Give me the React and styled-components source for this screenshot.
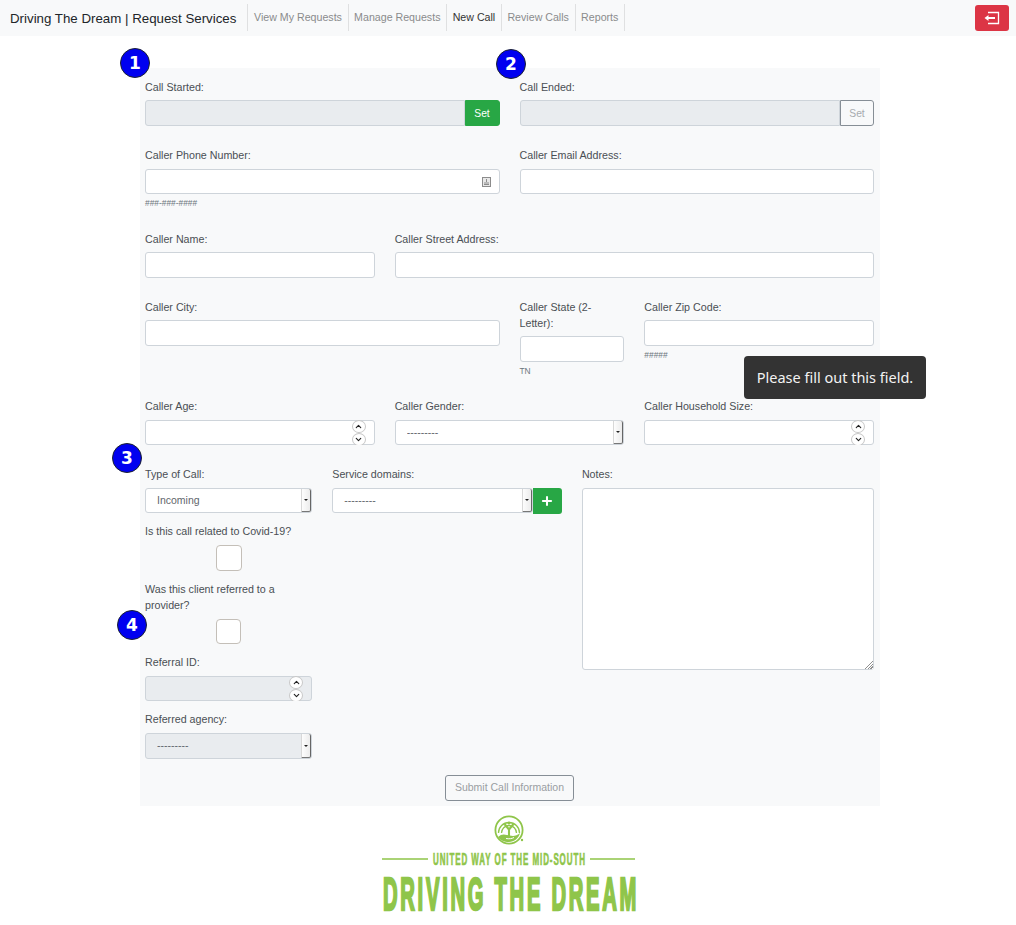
import React from 'react';
import styled, { createGlobalStyle } from 'styled-components';
import { ChevronUp, ChevronDown, Plus } from 'lucide-react';

const GlobalStyle = createGlobalStyle`
  html, body {
    margin: 0;
    padding: 0;
    background: #fff;
    font-family: 'Liberation Sans', Arial, sans-serif;
    color: #212529;
  }
  * {
    box-sizing: border-box;
  }
`;

const Navbar = styled.nav`
  height: 36px;
  background: #f8f9fa;
  display: flex;
  align-items: center;
  padding: 0 7px 0 10px;
`;

const Brand = styled.div`
  font-size: 13.3px;
  color: #212529;
  margin-right: 11px;
  padding-top: 1px;
`;

const NavList = styled.div`
  display: flex;
  height: 27px;
  margin-top: -1px;
  border-right: 1px solid #dfe0e1;
`;

const NavItem = styled.a`
  display: flex;
  align-items: center;
  padding: 0 5.6px 2px;
  font-size: 10.65px;
  border-left: 1px solid #dfe0e1;
  color: ${p => (p.$active ? '#333' : '#8a8b8c')};
`;

const LogoutButton = styled.button`
  margin-left: auto;
  width: 34px;
  height: 26px;
  border: 0;
  border-radius: 3px;
  background: #dc3545;
  display: flex;
  align-items: center;
  justify-content: center;
  padding: 0;
`;

const Panel = styled.main`
  position: relative;
  width: 740px;
  height: 738px;
  margin: 32px 0 0 140px;
  background: #f8f9fa;
  padding: 11px 6px 0 5px;
`;

const Row = styled.div`
  display: grid;
  grid-template-columns: repeat(12, 1fr);
  column-gap: 20px;
  margin-bottom: ${p => p.$after || 0}px;
`;

const Field = styled.div`
  grid-column: span ${p => p.$span};
  min-width: 0;
  margin-bottom: ${p => p.$after || 0}px;
`;

const Label = styled.label`
  display: block;
  font-size: 10.7px;
  line-height: 16px;
  color: #4a4f54;
  margin-bottom: ${p => p.$gap || 6}px;
`;

const Control = styled.div`
  position: relative;
  display: flex;
  flex: ${p => (p.$grow ? 1 : 'none')};
  align-items: flex-start;
  height: ${p => p.$h || 26}px;
`;

const TextInput = styled.input`
  flex: 1;
  min-width: 0;
  height: 100%;
  border: 1px solid #ced4da;
  border-radius: ${p => (p.$joined ? '3px 0 0 3px' : '3px')};
  background: ${p => (p.disabled ? '#e9ecef' : '#fff')};
  font: inherit;
  font-size: 11px;
  padding: 0 12px;
  outline: 0;
`;

const Select = styled.select`
  flex: 1;
  min-width: 0;
  height: 100%;
  appearance: none;
  border: 1px solid #ced4da;
  border-radius: 3px;
  background: ${p => (p.disabled ? '#e9ecef' : '#fff')};
  color: #5f666c;
  opacity: 1;
  font-family: inherit;
  font-size: 10.5px;
  padding: 0 0 2px 11px;
  outline: 0;
`;

const SelectArrow = styled.span`
  position: absolute;
  right: 1px;
  top: 1px;
  bottom: 1px;
  width: 10px;
  background: linear-gradient(90deg, #fdfdfd, #ececec);
  border-left: 1px solid #d8d8d8;
  border-right: 1px solid #666;
  border-bottom: 1px solid #777;
  border-radius: 0 2px 2px 0;
  display: flex;
  align-items: center;
  justify-content: center;
  &::after {
    content: '';
    border-top: 2px solid #222;
    border-left: 2px solid transparent;
    border-right: 2px solid transparent;
  }
`;

const Spinner = styled.span`
  position: absolute;
  right: 9px;
  top: 0;
  bottom: 0;
  overflow: hidden;
  display: flex;
  flex-direction: column;
`;

const SpinButton = styled.span`
  width: 14px;
  height: 13px;
  flex: none;
  border: 1px solid #c8c8c8;
  border-radius: 50%;
  background: #fff;
  display: flex;
  align-items: center;
  justify-content: center;
  color: #222;
`;

const FieldIcon = styled.svg`
  position: absolute;
  right: 9px;
  top: 8px;
`;

const Hint = styled.small`
  display: block;
  font-size: 8.4px;
  line-height: 12px;
  margin-top: 3px;
  color: #6c757d;
`;

const SetButton = styled.button`
  width: ${p => (p.$primary ? 35 : 34)}px;
  height: 100%;
  flex: none;
  font-family: inherit;
  font-size: 10.3px;
  padding: 0;
  border-radius: 0 3px 3px 0;
  border: 1px solid ${p => (p.$primary ? '#28a745' : '#868e96')};
  background: ${p => (p.$primary ? '#28a745' : 'transparent')};
  color: ${p => (p.$primary ? '#fff' : '#a7abaf')};
`;

const AddButton = styled.button`
  width: 29px;
  height: 26px;
  flex: none;
  padding: 0;
  border: 0;
  border-radius: 0 3px 3px 0;
  background: #28a745;
  color: #fff;
  display: flex;
  align-items: center;
  justify-content: center;
`;

const CheckRow = styled.div`
  display: flex;
  justify-content: center;
`;

const CheckBox = styled.input.attrs({ type: 'checkbox' })`
  appearance: none;
  width: ${p => p.$size || 26}px;
  height: ${p => p.$size || 26}px;
  margin: 0;
  background: #fff;
  border: 1px solid #c4bfb8;
  border-radius: 4px;
`;

const Notes = styled.textarea`
  display: block;
  width: 100%;
  height: 182px;
  border: 1px solid #ced4da;
  border-radius: 3px;
  background: #fff;
  resize: vertical;
  outline: 0;
  &::-webkit-resizer {
    background:
      linear-gradient(135deg, #fff 64%, transparent 64%),
      repeating-linear-gradient(135deg, #fff 0 1px, #8f8f8f 1px 2px);
  }
`;

const SubmitRow = styled.div`
  display: flex;
  justify-content: center;
  margin-top: 16px;
`;

const SubmitButton = styled.button`
  width: 129px;
  height: 26px;
  padding: 0 0 2px;
  font-family: inherit;
  font-size: 10.5px;
  color: #9a9ea2;
  background: transparent;
  border: 1px solid #868e96;
  border-radius: 3px;
`;

const StepBadge = styled.span`
  position: absolute;
  left: ${p => p.$x}px;
  top: ${p => p.$y}px;
  width: 30px;
  height: 30px;
  border-radius: 50%;
  background: #0000f0;
  border: 1px solid #1c2230;
  color: #fff;
  font-family: 'DejaVu Sans', sans-serif;
  font-weight: 700;
  font-size: 17px;
  display: flex;
  align-items: center;
  justify-content: center;
`;

const Tooltip = styled.div`
  position: absolute;
  left: 604px;
  top: 288px;
  width: 182px;
  height: 43px;
  padding-bottom: 2px;
  border-radius: 4px;
  background: #333;
  color: #f2f2f2;
  font-family: 'Noto Sans', 'Open Sans', sans-serif;
  font-size: 14.5px;
  display: flex;
  align-items: center;
  justify-content: center;
`;

const Footer = styled.footer`
  display: flex;
  justify-content: center;
  padding-top: 8px;
  height: 119px;
`;

const NumberField = ({ disabled }) => (
  <Control $h={25}>
    <TextInput type="text" disabled={disabled} />
    <Spinner>
      <SpinButton><ChevronUp size={9} strokeWidth={3} /></SpinButton>
      <SpinButton><ChevronDown size={9} strokeWidth={3} /></SpinButton>
    </Spinner>
  </Control>
);

const SelectField = ({ value, disabled, h = 25 }) => (
  <Control $h={h} $grow>
    <Select disabled={disabled} defaultValue={value}>
      <option>{value}</option>
    </Select>
    <SelectArrow />
  </Control>
);

const LogoutIcon = () => (
  <svg width="16" height="14" viewBox="0 0 16 14" fill="none" stroke="#fff">
    <path d="M4 1.5h10.5v11H4" strokeWidth="1.3" />
    <path d="M11 7H3" strokeWidth="2" />
    <path d="M0.5 7 4.5 4v6z" fill="#fff" stroke="none" />
  </svg>
);

const ContactIcon = () => (
  <FieldIcon width="9" height="10" viewBox="0 0 9 10">
    <rect x="0.5" y="0.5" width="8" height="9" fill="#e8e8e8" stroke="#8c8c8c" />
    <path d="M2 7.5h5M2 6h5M4.5 2v3" stroke="#8c8c8c" strokeWidth="1" />
  </FieldIcon>
);

const LOGO_GREEN = '#8fc54a';

const Logo = () => (
  <svg width="258" height="104" viewBox="0 0 258 104" fill="none" overflow="visible">
    <g stroke={LOGO_GREEN}>
      <circle cx="130" cy="16" r="13.6" strokeWidth="1.8" />
      <path d="M119.5 19a10.5 10.5 0 0 1 21 0" strokeWidth="1.3" />
      <path d="M122.5 19a7.5 7.5 0 0 1 15 0" strokeWidth="1.3" />
      <path d="M125.5 10 130 15.5l4.5-5.5M130 15.5V22" strokeWidth="2.1" />
      <path d="M3 45h46M211 45h45" strokeWidth="1.7" />
    </g>
    <circle cx="130" cy="9" r="1.5" fill={LOGO_GREEN} />
    <path d="M119 23c3-3 6-3 9-2l6 1c2 0 5-1 7-3-1 5-6 9-11 9-5 0-9-2-11-5z" fill={LOGO_GREEN} />
    <path d="M127 24.5c3 .6 6 .2 8-1" stroke="#fff" strokeWidth="1" />
    <circle cx="143" cy="26" r="1.2" fill={LOGO_GREEN} />
    <g
      fill={LOGO_GREEN}
      stroke={LOGO_GREEN}
      fontFamily="'Liberation Sans', Arial, sans-serif"
      fontWeight="700"
    >
      <text
        transform="translate(54 50.5) scale(.5 1)"
        fontSize="16"
        textLength="304"
        lengthAdjust="spacing"
        strokeWidth=".5"
        vectorEffect="non-scaling-stroke"
      >
        UNITED WAY OF THE MID-SOUTH
      </text>
      <text
        transform="translate(4 96) scale(.44 1)"
        fontSize="46"
        textLength="576"
        lengthAdjust="spacing"
        strokeWidth="2"
        vectorEffect="non-scaling-stroke"
      >
        DRIVING THE DREAM
      </text>
    </g>
  </svg>
);

const App = () => {
  return (
    <>
      <GlobalStyle />
      <Navbar>
        <Brand>Driving The Dream | Request Services</Brand>
        <NavList>
          <NavItem>View My Requests</NavItem>
          <NavItem>Manage Requests</NavItem>
          <NavItem $active>New Call</NavItem>
          <NavItem>Review Calls</NavItem>
          <NavItem>Reports</NavItem>
        </NavList>
        <LogoutButton aria-label="Log out"><LogoutIcon /></LogoutButton>
      </Navbar>

      <Panel>
        <Row $after={21}>
          <Field $span={6}>
            <Label $gap={5}>Call Started:</Label>
            <Control>
              <TextInput disabled $joined />
              <SetButton $primary>Set</SetButton>
            </Control>
          </Field>
          <Field $span={6}>
            <Label $gap={5}>Call Ended:</Label>
            <Control>
              <TextInput disabled $joined />
              <SetButton disabled>Set</SetButton>
            </Control>
          </Field>
        </Row>

        <Row $after={22}>
          <Field $span={6}>
            <Label>Caller Phone Number:</Label>
            <Control $h={25}>
              <TextInput />
              <ContactIcon />
            </Control>
            <Hint>###-###-####</Hint>
          </Field>
          <Field $span={6}>
            <Label>Caller Email Address:</Label>
            <Control $h={25}>
              <TextInput />
            </Control>
          </Field>
        </Row>

        <Row $after={21}>
          <Field $span={4}>
            <Label $gap={5}>Caller Name:</Label>
            <Control>
              <TextInput />
            </Control>
          </Field>
          <Field $span={8}>
            <Label $gap={5}>Caller Street Address:</Label>
            <Control>
              <TextInput />
            </Control>
          </Field>
        </Row>

        <Row $after={21}>
          <Field $span={6}>
            <Label $gap={5}>Caller City:</Label>
            <Control>
              <TextInput />
            </Control>
          </Field>
          <Field $span={2}>
            <Label $gap={5}>Caller State (2-Letter):</Label>
            <Control>
              <TextInput />
            </Control>
            <Hint>TN</Hint>
          </Field>
          <Field $span={4}>
            <Label $gap={5}>Caller Zip Code:</Label>
            <Control>
              <TextInput />
            </Control>
            <Hint>#####</Hint>
          </Field>
        </Row>

        <Row $after={21}>
          <Field $span={4}>
            <Label>Caller Age:</Label>
            <NumberField />
          </Field>
          <Field $span={4}>
            <Label>Caller Gender:</Label>
            <SelectField value="---------" />
          </Field>
          <Field $span={4}>
            <Label>Caller Household Size:</Label>
            <NumberField />
          </Field>
        </Row>

        <Row>
          <Field $span={3}>
            <Field $after={10}>
              <Label>Type of Call:</Label>
              <SelectField value="Incoming" />
            </Field>
            <Field $after={10}>
              <Label>Is this call related to Covid-19?</Label>
              <CheckRow><CheckBox /></CheckRow>
            </Field>
            <Field $after={10}>
              <Label>Was this client referred to a provider?</Label>
              <CheckRow><CheckBox $size={25} /></CheckRow>
            </Field>
            <Field $after={10}>
              <Label>Referral ID:</Label>
              <NumberField disabled />
            </Field>
            <Field>
              <Label>Referred agency:</Label>
              <SelectField value="---------" disabled h={26} />
            </Field>
          </Field>
          <Field $span={4}>
            <Label>Service domains:</Label>
            <Control $h={26}>
              <SelectField value="---------" />
              <AddButton aria-label="Add"><Plus size={14} strokeWidth={3.5} /></AddButton>
            </Control>
          </Field>
          <Field $span={5}>
            <Label>Notes:</Label>
            <Notes />
          </Field>
        </Row>

        <SubmitRow>
          <SubmitButton disabled>Submit Call Information</SubmitButton>
        </SubmitRow>

        <StepBadge $x={-20} $y={-20}>1</StepBadge>
        <StepBadge $x={356} $y={-19}>2</StepBadge>
        <StepBadge $x={-28} $y={375}>3</StepBadge>
        <StepBadge $x={-23} $y={542}>4</StepBadge>
        <Tooltip>Please fill out this field.</Tooltip>
      </Panel>

      <Footer><Logo /></Footer>
    </>
  );
};

export default App;
